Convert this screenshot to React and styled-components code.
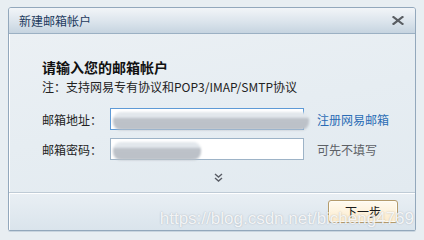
import React from "react";
import styled, { createGlobalStyle } from "styled-components";

const GlobalStyle = createGlobalStyle`
  html, body {
    margin: 0;
    padding: 0;
    background: #e8eef2;
  }
  body {
    font-family: "Noto Sans CJK SC", "Liberation Sans", sans-serif;
    font-size: 12px;
    color: #222;
  }
`;

function CloseIcon() {
  return (
    <svg width="12" height="9" viewBox="0 0 12 9">
      <path d="M1.5 1 L10.5 8 M10.5 1 L1.5 8" stroke="#5a5e63" strokeWidth="2.2" strokeLinecap="square" />
    </svg>
  );
}

function MoreIcon() {
  return (
    <svg width="9" height="9" viewBox="0 0 9 9">
      <path d="M1 1 L4.5 4 L8 1 M1 5 L4.5 8 L8 5" stroke="#5a5e66" strokeWidth="1.4" fill="none" />
    </svg>
  );
}

export default function App() {
  return (
    <>
      <GlobalStyle />
      <Page>
        <Window>
          <TitleBar>
            <Title>新建邮箱帐户</Title>
            <CloseButton>
              <CloseIcon />
            </CloseButton>
          </TitleBar>

          <Body>
            <Heading>请输入您的邮箱帐户</Heading>
            <Note>注：支持网易专有协议和POP3/IMAP/SMTP协议</Note>

            <Form>
              <Row>
                <Label>邮箱地址：</Label>
                <InputBox $focused>
                  <Redacted $width={196} />
                </InputBox>
                <Link>注册网易邮箱</Link>
              </Row>
              <Row>
                <Label>邮箱密码：</Label>
                <InputBox>
                  <Redacted $width={88} />
                </InputBox>
                <Hint>可先不填写</Hint>
              </Row>
            </Form>

            <More>
              <MoreIcon />
            </More>
          </Body>

          <Footer>
            <NextButton>下一步</NextButton>
          </Footer>

          <Watermark>https://blog.csdn.net/bicheng4769</Watermark>
        </Window>
      </Page>
    </>
  );
}

// styled-components
const Page = styled.div`
  width: 424px;
  height: 240px;
  padding: 7px 8px 0 8px;
  box-sizing: border-box;
`;

const Window = styled.div`
  position: relative;
  width: 408px;
  height: 224px;
  box-sizing: border-box;
  border: 1px solid #93a8bc;
  border-radius: 3px 3px 2px 2px;
  box-shadow: inset 1px 0 0 #ffffff, inset -1px 0 0 #f4f7fa, 0 1px 0 #c9d5df;
  display: flex;
  flex-direction: column;
  overflow: hidden;
`;

const TitleBar = styled.div`
  height: 25px;
  flex-shrink: 0;
  display: flex;
  align-items: center;
  justify-content: space-between;
  padding: 0 11px 0 10px;
  background: linear-gradient(#f2f5f8, #dbe4ec 55%, #c6d4e0);
  border-bottom: 1px solid #9bb0c3;
`;

const Title = styled.span`
  font-size: 12px;
  color: #1d3a5e;
  line-height: 25px;
`;

const CloseButton = styled.span`
  display: flex;
  align-items: center;
  cursor: pointer;
`;

const Body = styled.div`
  flex: 1;
  padding: 23px 0 0 33px;
  background: linear-gradient(170deg, #ebf0f4, #e6edf2 50%, #e2eaf0);
  box-shadow: inset 1px 0 0 #ffffff;
`;

const Heading = styled.div`
  font-size: 14px;
  font-weight: bold;
  line-height: 20px;
  color: #111;
`;

const Note = styled.div`
  margin-top: 1px;
  line-height: 18px;
  color: #222;
`;

const Form = styled.div`
  margin-top: 12px;
  display: flex;
  flex-direction: column;
  gap: 8px;
`;

const Row = styled.div`
  display: flex;
  align-items: center;
  height: 22px;
`;

const Label = styled.span`
  width: 68px;
  flex-shrink: 0;
  color: #222;
`;

const InputBox = styled.div`
  width: 194px;
  height: 22px;
  box-sizing: border-box;
  border: 1px solid ${(p) => (p.$focused ? "#5e9ad6" : "#9db3c7")};
  background: #ffffff;
  display: flex;
  align-items: center;
  padding: 0 0 0 2px;
  overflow: visible;
`;

const Redacted = styled.span`
  display: block;
  width: ${(p) => p.$width}px;
  height: 18px;
  margin-top: 4px;
  flex-shrink: 0;
  border-radius: 8px;
  background: linear-gradient(#e2e7ec 0%, #e2e7ec 30%, #bdc2c9 35%, #bcc1c8 100%);
  filter: blur(1.2px);
`;

const Link = styled.a`
  margin-left: 13px;
  color: #2b6cb5;
  cursor: pointer;
`;

const Hint = styled.span`
  margin-left: 13px;
  color: #5d6166;
`;

const More = styled.div`
  margin: 13px 0 0 172px;
  height: 9px;
  display: flex;
  cursor: pointer;
`;

const Footer = styled.div`
  height: 36px;
  flex-shrink: 0;
  display: flex;
  align-items: center;
  justify-content: flex-end;
  padding: 0 17px 1px 0;
  border-top: 1px solid #bfcbd6;
  box-shadow: inset 0 1px 0 #ffffff, inset 1px 0 0 #ffffff;
  background: linear-gradient(#e9eff4, #dae4ec);
`;

const NextButton = styled.button`
  width: 70px;
  height: 23px;
  padding: 0;
  border: 1px solid #b49b6c;
  border-radius: 3px;
  background: linear-gradient(#fffaf0, #fcebcb);
  box-shadow: inset 0 0 0 1px #fffdf6;
  font-family: "Noto Sans CJK SC", "Liberation Sans", sans-serif;
  font-size: 12px;
  color: #1a1a1a;
  cursor: pointer;
`;

const Watermark = styled.span`
  position: absolute;
  right: 1px;
  bottom: 1px;
  font-family: "Liberation Sans", "DejaVu Sans", sans-serif;
  font-size: 17px;
  line-height: 20px;
  color: rgba(255, 255, 255, 0.85);
  text-shadow: 0 0 1.5px rgba(90, 100, 112, 0.45);
  pointer-events: none;
  white-space: nowrap;
`;
